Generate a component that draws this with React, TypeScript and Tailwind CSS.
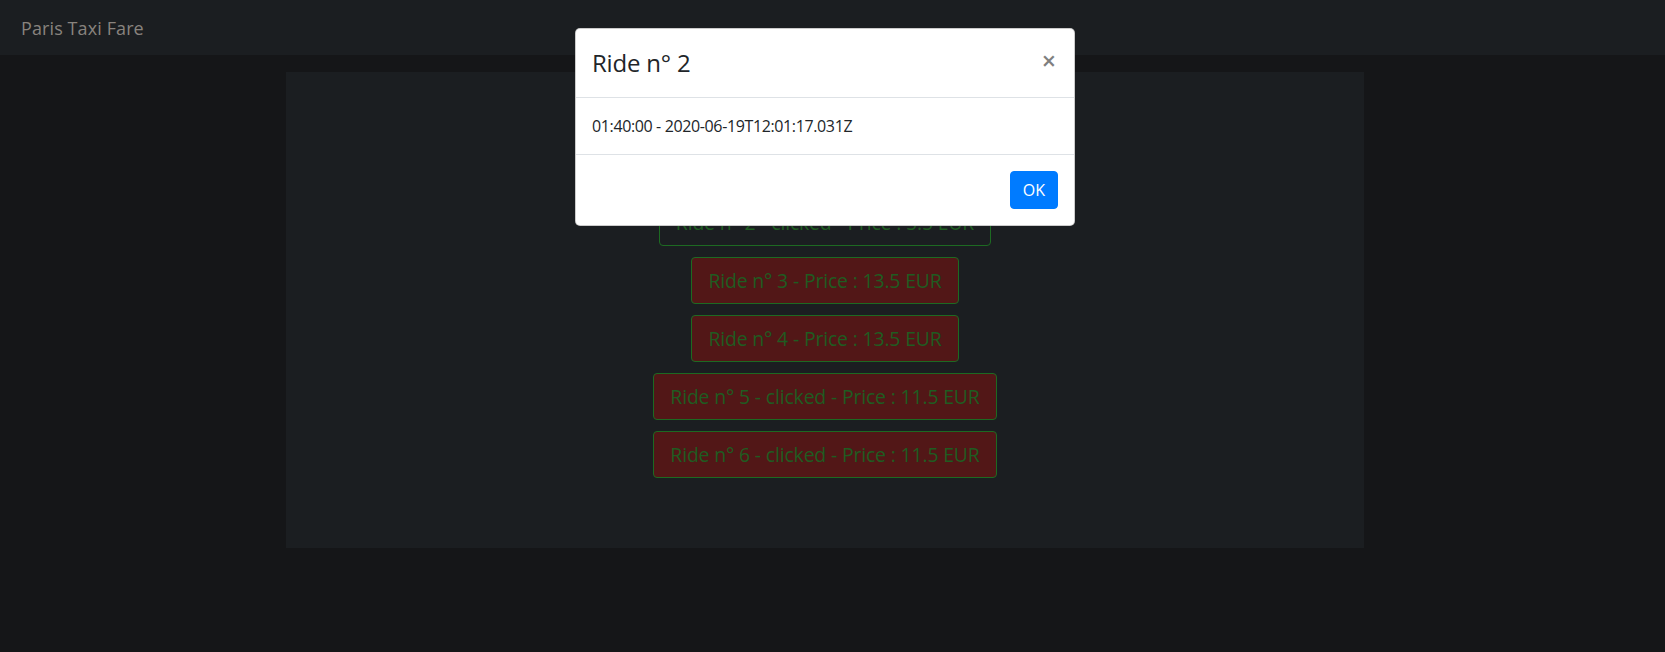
import React from 'react';

interface Ride {
  id: number;
  clicked: boolean;
  price: number;
  outline?: boolean;
}

const rides: Ride[] = [
  { id: 1, clicked: false, price: 13.5, outline: true },
  { id: 2, clicked: true, price: 5.5, outline: true },
  { id: 3, clicked: false, price: 13.5 },
  { id: 4, clicked: false, price: 13.5 },
  { id: 5, clicked: true, price: 11.5 },
  { id: 6, clicked: true, price: 11.5 },
];

function RideButton({ ride }: { ride: Ride }) {
  const label = `Ride n° ${ride.id}${ride.clicked ? ' - clicked' : ''} - Price : ${ride.price} EUR`;
  return (
    <button
      className={
        'h-[47px] px-4 rounded-[4px] border border-[#1d6a22] text-[19.4px] tracking-[-0.15px] leading-[30px] text-[#1f5c21] whitespace-nowrap ' +
        (ride.outline ? 'bg-transparent' : 'bg-[#521717]')
      }
    >
      {label}
    </button>
  );
}

export default function App() {
  return (
    <div className="relative w-[1665px] h-[652px] overflow-hidden bg-[#151618] font-['Open_Sans',sans-serif]">
      {/* navbar */}
      <nav className="h-[55px] bg-[#1b1e21] flex items-center px-[21px]">
        <span className="text-[18px] leading-[30px] tracking-[0.1px] text-[#88837e] pt-[1px]">Paris Taxi Fare</span>
      </nav>

      {/* page, viewport minus scrollbar gutter */}
      <div className="w-[1650px] flex justify-center pt-[17px]">
        <div className="w-[1078px] h-[476px] bg-[#1b1e21] flex flex-col items-center gap-[11px] pt-[69px]">
          {rides.map((ride) => (
            <RideButton key={ride.id} ride={ride} />
          ))}
        </div>
      </div>

      {/* modal */}
      <div className="absolute left-[575px] top-[28px] w-[500px] bg-white rounded-[5px] border border-black/20 overflow-hidden">
        <div className="flex items-start justify-between p-4 border-b border-[#dee2e6]">
          <h4 className="text-[24px] leading-[36px] font-medium tracking-[-0.2px] text-[#212529]">Ride n° 2</h4>
          <button className="-m-4 ml-auto p-4 pt-[19px] pr-[18px] text-[25px] leading-none font-semibold text-black opacity-50">
            ×
          </button>
        </div>
        <div className="p-4 text-[16px] leading-6 tracking-[-0.37px] text-[#212529]">01:40:00 - 2020-06-19T12:01:17.031Z</div>
        <div className="flex justify-end items-center p-3 border-t border-[#dee2e6]">
          <button className="m-1 h-[38px] px-3 rounded-[4px] bg-[#007bff] border border-[#007bff] text-white text-[16px] leading-6">
            OK
          </button>
        </div>
      </div>
    </div>
  );
}
